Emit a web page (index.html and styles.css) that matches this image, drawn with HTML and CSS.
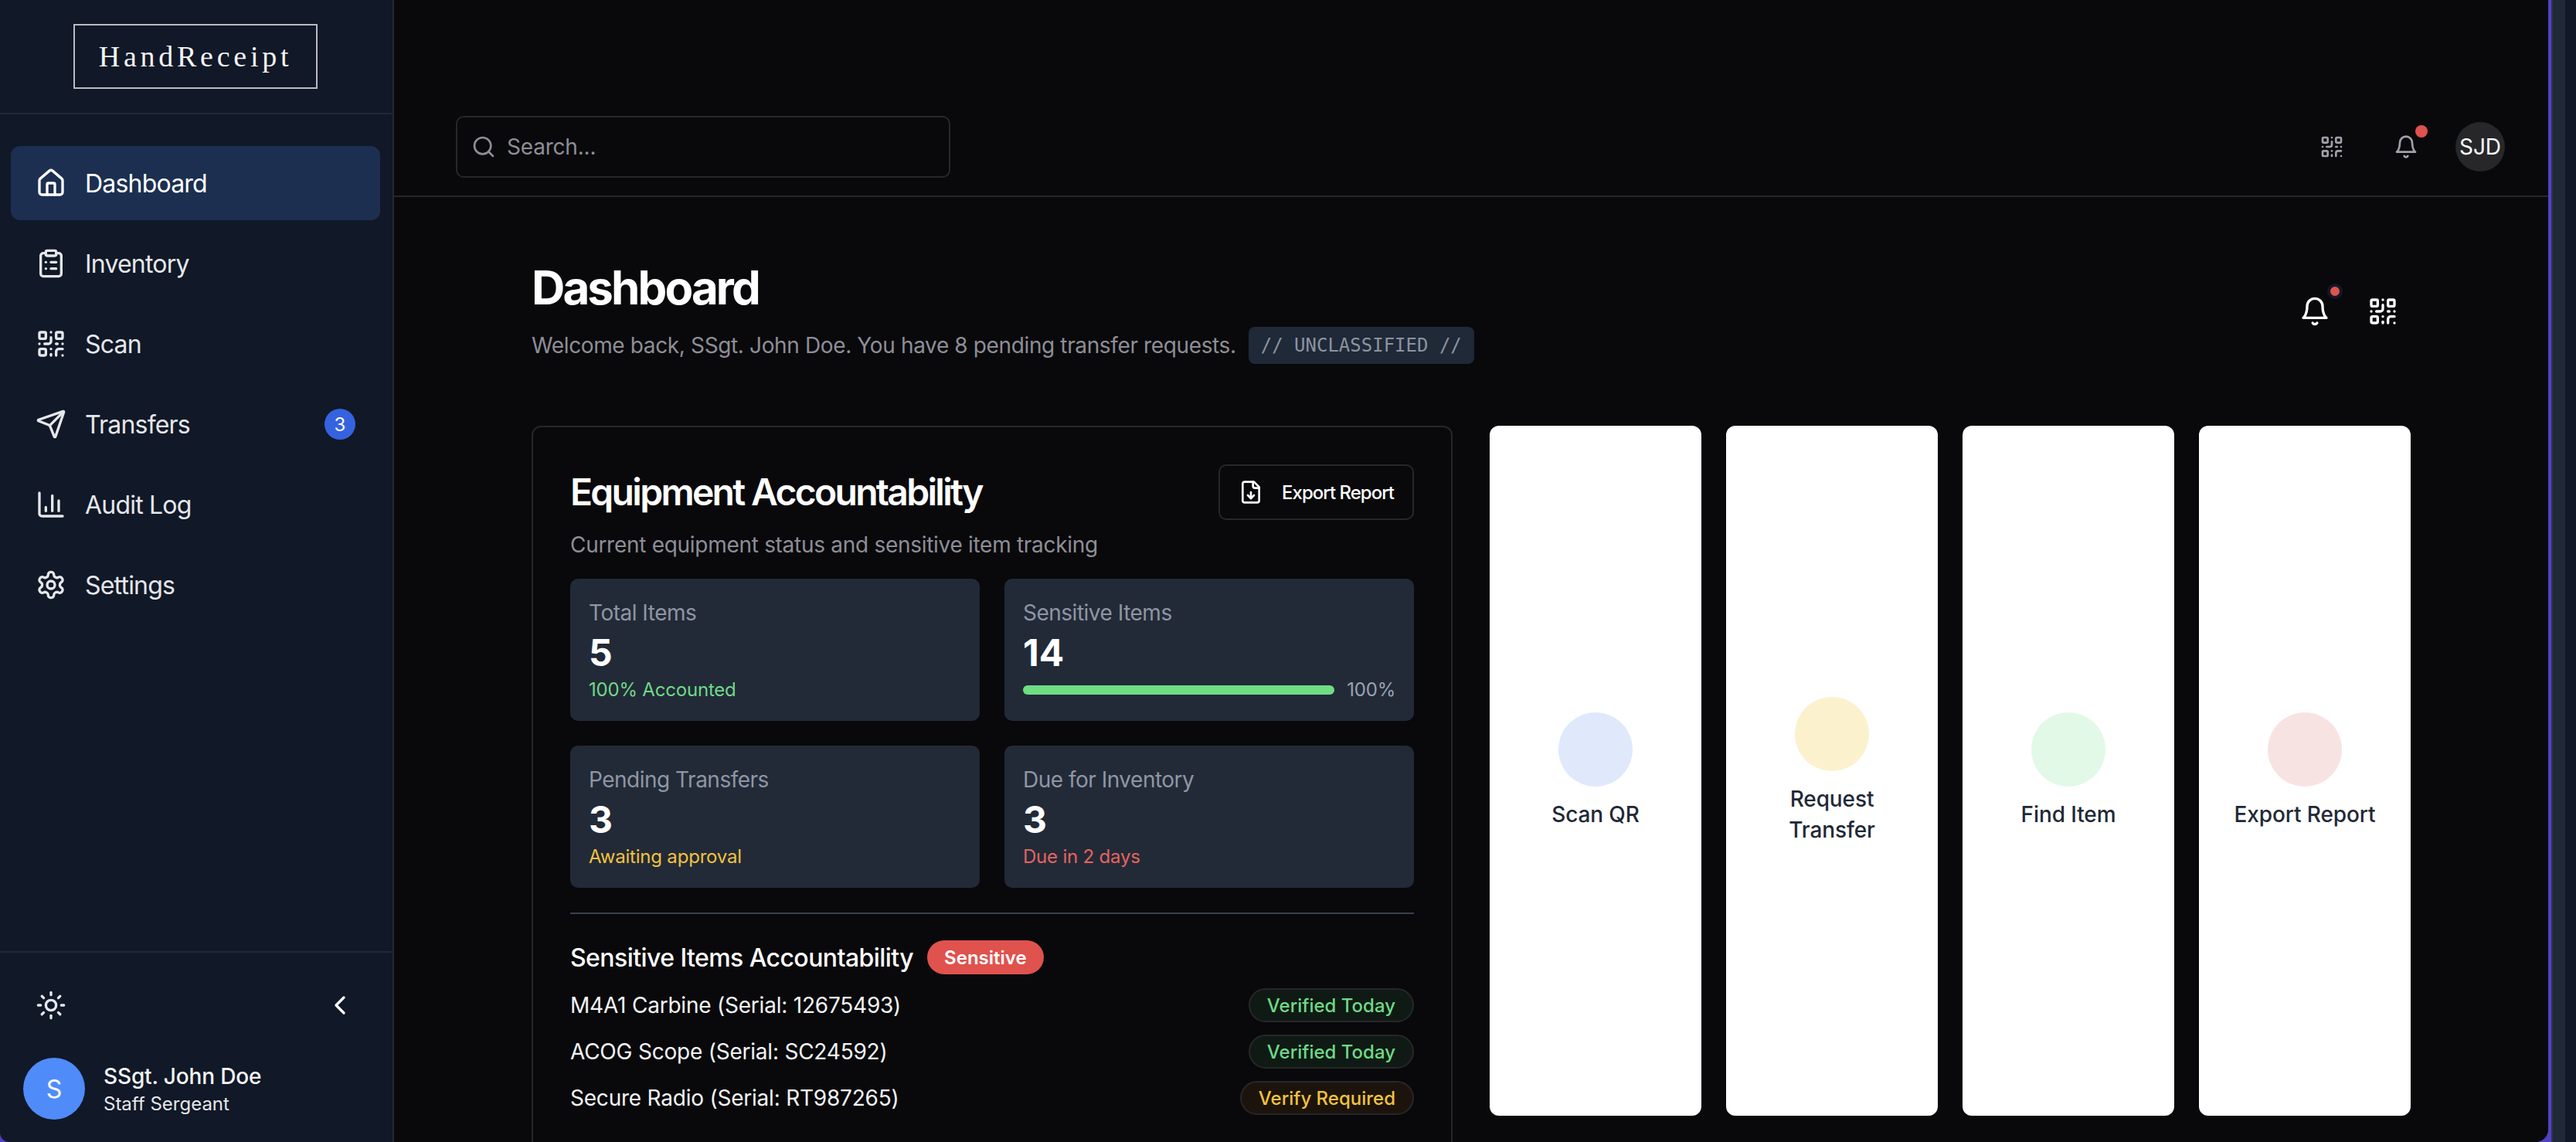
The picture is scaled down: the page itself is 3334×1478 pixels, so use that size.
FILE: index.html
```html
<!DOCTYPE html>
<html lang="en">
<head>
    <meta charset="UTF-8">
    <meta name="viewport" content="width=device-width, initial-scale=1.0">
    <title>HandReceipt - Dashboard</title>
    <link rel="stylesheet" href="styles.css">
</head>
<body>
    <svg class="sprite" xmlns="http://www.w3.org/2000/svg">
        <symbol id="i-home" viewBox="0 0 24 24"><path d="M15 21v-8a1 1 0 0 0-1-1h-4a1 1 0 0 0-1 1v8"/><path d="M3 10a2 2 0 0 1 .709-1.528l7-5.999a2 2 0 0 1 2.582 0l7 5.999A2 2 0 0 1 21 10v9a2 2 0 0 1-2 2H5a2 2 0 0 1-2-2z"/></symbol>
        <symbol id="i-clipboard" viewBox="0 0 24 24"><rect width="8" height="4" x="8" y="2" rx="1" ry="1"/><path d="M16 4h2a2 2 0 0 1 2 2v14a2 2 0 0 1-2 2H6a2 2 0 0 1-2-2V6a2 2 0 0 1 2-2h2"/><path d="M12 11h4"/><path d="M12 16h4"/><path d="M8 11h.01"/><path d="M8 16h.01"/></symbol>
        <symbol id="i-qr" viewBox="0 0 24 24"><rect width="5" height="5" x="3" y="3" rx="1"/><rect width="5" height="5" x="16" y="3" rx="1"/><rect width="5" height="5" x="3" y="16" rx="1"/><path d="M21 16h-3a2 2 0 0 0-2 2v3"/><path d="M21 21v.01"/><path d="M12 7v3a2 2 0 0 1-2 2H7"/><path d="M3 12h.01"/><path d="M12 3h.01"/><path d="M12 16v.01"/><path d="M16 12h1"/><path d="M21 12v.01"/><path d="M12 21v-1"/></symbol>
        <symbol id="i-send" viewBox="0 0 24 24"><path d="M14.536 21.686a.5.5 0 0 0 .937-.024l6.5-19a.496.496 0 0 0-.635-.635l-19 6.5a.5.5 0 0 0-.024.937l7.93 3.18a2 2 0 0 1 1.112 1.11z"/><path d="m21.854 2.147-10.94 10.939"/></symbol>
        <symbol id="i-chart" viewBox="0 0 24 24"><path d="M3 3v16a2 2 0 0 0 2 2h16"/><path d="M18 17V9"/><path d="M13 17V5"/><path d="M8 17v-3"/></symbol>
        <symbol id="i-settings" viewBox="0 0 24 24"><path d="M12.22 2h-.44a2 2 0 0 0-2 2v.18a2 2 0 0 1-1 1.73l-.43.25a2 2 0 0 1-2 0l-.15-.08a2 2 0 0 0-2.73.73l-.22.38a2 2 0 0 0 .73 2.73l.15.1a2 2 0 0 1 1 1.72v.51a2 2 0 0 1-1 1.74l-.15.09a2 2 0 0 0-.73 2.73l.22.38a2 2 0 0 0 2.73.73l.15-.08a2 2 0 0 1 2 0l.43.25a2 2 0 0 1 1 1.73V20a2 2 0 0 0 2 2h.44a2 2 0 0 0 2-2v-.18a2 2 0 0 1 1-1.73l.43-.25a2 2 0 0 1 2 0l.15.08a2 2 0 0 0 2.73-.73l.22-.39a2 2 0 0 0-.73-2.73l-.15-.08a2 2 0 0 1-1-1.74v-.5a2 2 0 0 1 1-1.74l.15-.09a2 2 0 0 0 .73-2.73l-.22-.38a2 2 0 0 0-2.73-.73l-.15.08a2 2 0 0 1-2 0l-.43-.25a2 2 0 0 1-1-1.73V4a2 2 0 0 0-2-2z"/><circle cx="12" cy="12" r="3"/></symbol>
        <symbol id="i-sun" viewBox="0 0 24 24"><circle cx="12" cy="12" r="4"/><path d="M12 2v2"/><path d="M12 20v2"/><path d="m4.93 4.93 1.41 1.41"/><path d="m17.66 17.66 1.41 1.41"/><path d="M2 12h2"/><path d="M20 12h2"/><path d="m6.34 17.66-1.41 1.41"/><path d="m19.07 4.93-1.41 1.41"/></symbol>
        <symbol id="i-chevron" viewBox="0 0 24 24"><path d="m15 18-6-6 6-6"/></symbol>
        <symbol id="i-bell" viewBox="0 0 24 24"><path d="M6 8a6 6 0 0 1 12 0c0 7 3 9 3 9H3s3-2 3-9"/><path d="M10.3 21a1.94 1.94 0 0 0 3.4 0"/></symbol>
        <symbol id="i-search" viewBox="0 0 24 24"><circle cx="11" cy="11" r="8"/><path d="m21 21-4.3-4.3"/></symbol>
        <symbol id="i-file" viewBox="0 0 24 24"><path d="M15 2H6a2 2 0 0 0-2 2v16a2 2 0 0 0 2 2h12a2 2 0 0 0 2-2V7Z"/><path d="M14 2v4a2 2 0 0 0 2 2h4"/><path d="M12 18v-6"/><path d="m9 15 3 3 3-3"/></symbol>
    </svg>

    <div class="app">
        <aside class="sidebar">
            <div class="sidebar-top">
                <div class="logo">HandReceipt</div>
            </div>
            <nav class="nav">
                <a class="nav-item active"><svg class="icon-lg"><use href="#i-home"/></svg>Dashboard</a>
                <a class="nav-item"><svg class="icon-lg"><use href="#i-clipboard"/></svg>Inventory</a>
                <a class="nav-item"><svg class="icon-lg"><use href="#i-qr"/></svg>Scan</a>
                <a class="nav-item"><svg class="icon-lg"><use href="#i-send"/></svg>Transfers<span class="nav-count">3</span></a>
                <a class="nav-item"><svg class="icon-lg"><use href="#i-chart"/></svg>Audit Log</a>
                <a class="nav-item"><svg class="icon-lg"><use href="#i-settings"/></svg>Settings</a>
            </nav>
            <div class="sidebar-bottom">
                <div class="sidebar-tools">
                    <svg class="icon-lg"><use href="#i-sun"/></svg>
                    <svg class="icon-lg chevron"><use href="#i-chevron"/></svg>
                </div>
                <div class="user">
                    <div class="user-avatar">S</div>
                    <div>
                        <div class="user-name">SSgt. John Doe</div>
                        <div class="user-rank">Staff Sergeant</div>
                    </div>
                </div>
            </div>
        </aside>

        <main class="main">
            <header class="topbar">
                <div class="search">
                    <svg class="icon-md"><use href="#i-search"/></svg>
                    <span>Search...</span>
                </div>
                <div class="topbar-actions">
                    <button class="top-btn"><svg class="icon-md"><use href="#i-qr"/></svg></button>
                    <button class="top-btn"><svg class="icon-md"><use href="#i-bell"/></svg><span class="top-dot"></span></button>
                    <div class="top-avatar">SJD</div>
                </div>
            </header>

            <div class="content">
                <div class="page-head">
                    <div>
                        <h1>Dashboard</h1>
                        <div class="welcome">
                            <span>Welcome back, SSgt. John Doe. You have 8 pending transfer requests.</span>
                            <code class="classification">// UNCLASSIFIED //</code>
                        </div>
                    </div>
                    <div class="page-actions">
                        <button class="page-btn"><svg class="icon-lg"><use href="#i-bell"/></svg><span class="page-dot"></span></button>
                        <button class="page-btn"><svg class="icon-lg"><use href="#i-qr"/></svg></button>
                    </div>
                </div>

                <div class="columns">
                    <section class="card">
                        <div class="card-head">
                            <h2>Equipment Accountability</h2>
                            <button class="export-btn"><svg class="icon-md"><use href="#i-file"/></svg>Export Report</button>
                        </div>
                        <p class="card-sub">Current equipment status and sensitive item tracking</p>

                        <div class="stats">
                            <div class="stat">
                                <div class="stat-label">Total Items</div>
                                <div class="stat-value">5</div>
                                <div class="stat-note green">100% Accounted</div>
                            </div>
                            <div class="stat">
                                <div class="stat-label">Sensitive Items</div>
                                <div class="stat-value">14</div>
                                <div class="stat-note stat-progress">
                                    <div class="bar"></div>
                                    <span>100%</span>
                                </div>
                            </div>
                            <div class="stat">
                                <div class="stat-label">Pending Transfers</div>
                                <div class="stat-value">3</div>
                                <div class="stat-note yellow">Awaiting approval</div>
                            </div>
                            <div class="stat">
                                <div class="stat-label">Due for Inventory</div>
                                <div class="stat-value">3</div>
                                <div class="stat-note red">Due in 2 days</div>
                            </div>
                        </div>

                        <div class="sensitive">
                            <div class="sensitive-head">
                                <h3>Sensitive Items Accountability</h3>
                                <span class="tag">Sensitive</span>
                            </div>
                            <div class="sensitive-row">
                                <span>M4A1 Carbine (Serial: 12675493)</span>
                                <span class="pill pill-ok">Verified Today</span>
                            </div>
                            <div class="sensitive-row">
                                <span>ACOG Scope (Serial: SC24592)</span>
                                <span class="pill pill-ok">Verified Today</span>
                            </div>
                            <div class="sensitive-row">
                                <span>Secure Radio (Serial: RT987265)</span>
                                <span class="pill pill-warn">Verify Required</span>
                            </div>
                        </div>
                    </section>

                    <section class="quick">
                        <div class="tile"><div class="tile-dot blue-dot"></div><div class="tile-text">Scan QR</div></div>
                        <div class="tile"><div class="tile-dot yellow-dot"></div><div class="tile-text">Request Transfer</div></div>
                        <div class="tile"><div class="tile-dot green-dot"></div><div class="tile-text">Find Item</div></div>
                        <div class="tile"><div class="tile-dot red-dot"></div><div class="tile-text">Export Report</div></div>
                    </section>
                </div>
            </div>
        </main>

        <div class="edge"><div class="edge-panel"></div></div>
    </div>
</body>
</html>
```

FILE: styles.css
```css
* {
    box-sizing: border-box;
}
html, body {
    margin: 0;
    height: 100%;
    overflow: hidden;
}
body {
    font-family: Inter, "Noto Sans", sans-serif;
    background-color: #5240c4;
    color: #fff;
}
h1, h2, h3, p {
    margin: 0;
}
button {
    font-family: inherit;
    color: inherit;
    background: none;
    border: none;
    padding: 0;
}
.sprite {
    display: none;
}
.sprite symbol, svg {
    fill: none;
    stroke: currentColor;
    stroke-width: 2;
    stroke-linecap: round;
    stroke-linejoin: round;
}
.icon-lg {
    width: 40px;
    height: 40px;
    flex-shrink: 0;
}
.icon-md {
    width: 32px;
    height: 32px;
    flex-shrink: 0;
}
.app {
    display: flex;
    height: 1478px;
    overflow: hidden;
}

/* sidebar */
.sidebar {
    width: 510px;
    flex-shrink: 0;
    display: flex;
    flex-direction: column;
    background-color: #111827;
    border-right: 2px solid #1f2937;
    border-bottom-left-radius: 12px;
}
.sidebar-top {
    height: 148px;
    display: flex;
    justify-content: center;
    align-items: center;
    padding: 0 2px 0 0;
    border-bottom: 2px solid #1f2937;
}
.logo {
    width: 316px;
    height: 84px;
    display: flex;
    justify-content: center;
    align-items: center;
    border: 2px solid #b9bbc0;
    font-family: "Liberation Serif", serif;
    font-size: 38px;
    letter-spacing: 0.125em;
    color: #f3f4f6;
}
.nav {
    display: flex;
    flex-direction: column;
    gap: 8px;
    padding: 41px 16px 0 14px;
}
.nav-item {
    height: 96px;
    display: flex;
    align-items: center;
    gap: 24px;
    padding: 0 32px;
    border-radius: 12px;
    font-size: 32px;
    letter-spacing: -0.8px;
    color: #e5e7eb;
}
.nav-item.active {
    background-color: #1c2f50;
    color: #fff;
}
.nav-count {
    width: 40px;
    height: 40px;
    margin-left: auto;
    display: flex;
    justify-content: center;
    align-items: center;
    border-radius: 50%;
    background-color: #3563e0;
    color: #fff;
    font-size: 24px;
    letter-spacing: 0;
}
.sidebar-bottom {
    margin-top: auto;
    padding: 32px 0 29px;
    border-top: 2px solid #1f2937;
}
.sidebar-tools {
    height: 72px;
    display: flex;
    justify-content: space-between;
    align-items: center;
    padding: 0 48px 0 46px;
    color: #e5e7eb;
}
.chevron {
    color: #fff;
}
.user {
    display: flex;
    align-items: center;
    gap: 24px;
    margin-top: 32px;
    padding-left: 30px;
}
.user-avatar {
    width: 80px;
    height: 80px;
    display: flex;
    justify-content: center;
    align-items: center;
    border-radius: 50%;
    background-color: #4f8cf9;
    font-size: 32px;
}
.user-name {
    font-size: 28px;
    line-height: 40px;
    font-weight: 500;
    letter-spacing: -0.15px;
    color: #f3f4f6;
}
.user-rank {
    font-size: 24px;
    line-height: 32px;
    color: #e5e7eb;
}

/* main area */
.main {
    flex: 1;
    min-width: 0;
    margin-right: 4px;
    background-color: #09090b;
    border-bottom-right-radius: 16px;
    overflow: hidden;
}
.topbar {
    height: 255px;
    display: flex;
    justify-content: space-between;
    align-items: center;
    padding: 126px 56px 0 80px;
    border-bottom: 2px solid #27272a;
}
.search {
    width: 640px;
    height: 80px;
    display: flex;
    align-items: center;
    gap: 14px;
    padding: 0 18px;
    border: 2px solid #27272a;
    border-radius: 10px;
    font-size: 28px;
    letter-spacing: -0.2px;
    color: #8e8e97;
}
.topbar-actions {
    display: flex;
    align-items: center;
    gap: 32px;
}
.top-btn {
    position: relative;
    width: 64px;
    height: 64px;
    display: flex;
    justify-content: center;
    align-items: center;
    color: #a1a1aa;
}
.top-dot {
    position: absolute;
    top: 4px;
    right: 4px;
    width: 16px;
    height: 16px;
    border-radius: 50%;
    background-color: #e0524d;
}
.top-avatar {
    width: 64px;
    height: 64px;
    display: flex;
    justify-content: center;
    align-items: center;
    border-radius: 50%;
    background-color: #27272a;
    font-size: 28px;
}
.content {
    width: 2432px;
    margin: 0 auto;
    padding-top: 81px;
}
.page-head {
    display: flex;
    justify-content: space-between;
    align-items: center;
    margin-bottom: 80px;
}
h1 {
    font-size: 60px;
    line-height: 72px;
    font-weight: 700;
    letter-spacing: -2.9px;
    margin-bottom: 15px;
}
.welcome {
    display: flex;
    align-items: center;
    gap: 16px;
    font-size: 28px;
    letter-spacing: -0.37px;
    color: #8e8e97;
}
.classification {
    height: 48px;
    display: flex;
    align-items: center;
    padding: 0 16px;
    border-radius: 8px;
    background-color: #1f2937;
    font-family: "DejaVu Sans Mono", "Liberation Mono", monospace;
    font-size: 24px;
    letter-spacing: 0;
    color: #8b93a1;
}
.page-actions {
    display: flex;
    gap: 16px;
    margin-bottom: 2px;
}
.page-btn {
    position: relative;
    width: 72px;
    height: 72px;
    display: flex;
    justify-content: center;
    align-items: center;
}
.page-dot {
    position: absolute;
    top: 0;
    right: 0;
    width: 20px;
    height: 20px;
    border: 4px solid #111827;
    border-radius: 50%;
    background-color: #e0524d;
}
.columns {
    display: grid;
    grid-template-columns: 1fr 1fr;
    gap: 48px;
    align-items: start;
}

/* accountability card */
.card {
    padding: 48px;
    border: 2px solid #27272a;
    border-radius: 12px;
}
.card-head {
    display: flex;
    justify-content: space-between;
    align-items: center;
}
h2 {
    font-size: 48px;
    line-height: 56px;
    font-weight: 600;
    letter-spacing: -2.7px;
}
.export-btn {
    height: 72px;
    display: flex;
    align-items: center;
    gap: 24px;
    padding: 0 24px;
    border: 2px solid #27272a;
    border-radius: 10px;
    font-size: 24px;
    font-weight: 500;
    letter-spacing: -1px;
}
.card-sub {
    margin: 12px 0 24px;
    font-size: 28px;
    line-height: 40px;
    letter-spacing: -0.29px;
    color: #8e8e97;
}
.stats {
    display: grid;
    grid-template-columns: 1fr 1fr;
    gap: 32px;
}
.stat {
    height: 184px;
    padding: 24px;
    border-radius: 10px;
    background-color: #222a38;
}
.stat-label {
    font-size: 28px;
    line-height: 40px;
    letter-spacing: -0.5px;
    color: #8f96a3;
}
.stat-value {
    font-size: 48px;
    line-height: 64px;
    font-weight: 700;
}
.stat-note {
    font-size: 24px;
    line-height: 32px;
    letter-spacing: -0.2px;
}
.green {
    color: #6fd987;
}
.yellow {
    color: #f2c23e;
}
.red {
    color: #e5645f;
}
.stat-progress {
    display: flex;
    align-items: center;
    gap: 16px;
    color: #9ca3af;
}
.bar {
    flex: 1;
    height: 12px;
    border-radius: 6px;
    background-color: #6fdc84;
}
.sensitive {
    margin-top: 32px;
    padding-top: 34px;
    border-top: 2px solid #374151;
}
.sensitive-head {
    display: flex;
    align-items: center;
    gap: 18px;
    margin-bottom: 18px;
}
h3 {
    font-size: 32px;
    font-weight: 500;
    letter-spacing: -0.57px;
}
.tag {
    height: 44px;
    display: flex;
    align-items: center;
    padding: 0 22px;
    border-radius: 22px;
    background-color: #e0524d;
    font-size: 24px;
    font-weight: 600;
}
.sensitive-row {
    display: flex;
    justify-content: space-between;
    align-items: center;
    margin-bottom: 16px;
    font-size: 28px;
    letter-spacing: -0.22px;
    color: #f3f4f6;
}
.pill {
    height: 44px;
    display: flex;
    align-items: center;
    padding: 0 22px;
    border: 2px solid #27272a;
    border-radius: 22px;
    font-size: 24px;
    font-weight: 500;
    letter-spacing: 0;
}
.pill-ok {
    background-color: #0f1a14;
    color: #6fd987;
}
.pill-warn {
    background-color: #1c140c;
    color: #f2c23e;
}

/* quick actions */
.quick {
    height: 893px;
    display: grid;
    grid-template-columns: repeat(4, 1fr);
    gap: 32px;
}
.tile {
    display: flex;
    flex-direction: column;
    justify-content: center;
    align-items: center;
    gap: 16px;
    padding: 0 32px;
    border-radius: 12px;
    background-color: #fff;
}
.tile-dot {
    width: 96px;
    height: 96px;
    border-radius: 50%;
}
.blue-dot {
    background-color: #dfe9fb;
}
.yellow-dot {
    background-color: #fbf2cd;
}
.green-dot {
    background-color: #e2f9e7;
}
.red-dot {
    background-color: #f8e3e3;
}
.tile-text {
    font-size: 28px;
    line-height: 40px;
    font-weight: 500;
    letter-spacing: -0.1px;
    text-align: center;
    color: #1f2937;
}

/* strip of the next window on the right */
.edge {
    width: 32px;
    flex-shrink: 0;
    background-color: #111827;
    border-left: 2px solid #2e3347;
}
.edge-panel {
    width: 16px;
    height: 100%;
    background-color: #1f2937;
}
```
